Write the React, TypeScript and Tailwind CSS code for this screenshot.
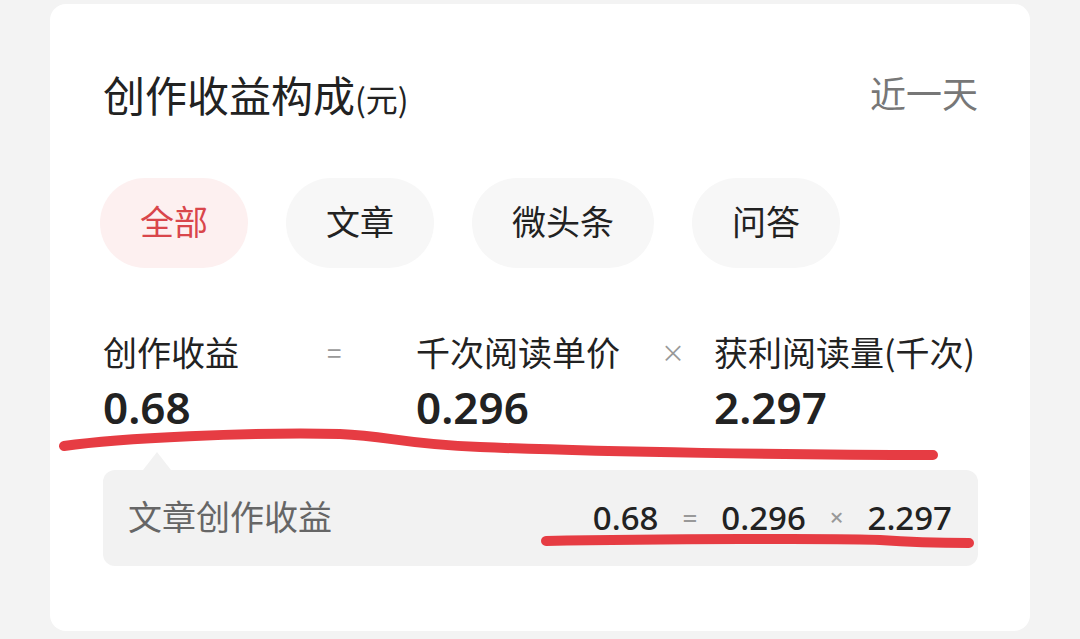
import React from 'react';

const cjk = { fontFamily: '"Noto Sans CJK SC", "Noto Sans", sans-serif' };
const num = { fontFamily: '"Noto Sans", "Noto Sans CJK SC", sans-serif' };

const tabs = ['全部', '文章', '微头条', '问答'];

export default function App() {
    return (
        <div className="relative w-[1080px] h-[639px] bg-[#f3f3f3] pt-[4px] px-[50px] overflow-hidden" style={cjk}>
            <div className="bg-white rounded-[16px] h-[627px] pl-[53px] pr-[52px] pt-[68px]">
                {/* header */}
                <div className="flex items-center justify-between h-[44px]">
                    <div className="flex items-baseline text-[#222] text-[42px] leading-none">
                        创作收益构成<span className="text-[32px]">(元)</span>
                    </div>
                    <div className="text-[36px] text-[#777] leading-none -mt-[4px]">近一天</div>
                </div>

                {/* tabs */}
                <div className="flex gap-[38px] mt-[62px] -ml-[3px]">
                    {tabs.map((t, i) => (
                        <div
                            key={t}
                            className={
                                i === 0
                                    ? 'h-[90px] px-[40px] rounded-full flex items-center text-[34px] leading-none pb-[4px] bg-[#fdf0f0] text-[#d9464b]'
                                    : 'h-[90px] px-[40px] rounded-full flex items-center text-[34px] leading-none pb-[4px] bg-[#f7f7f7] text-[#222]'
                            }
                        >
                            {t}
                        </div>
                    ))}
                </div>

                {/* formula */}
                <div className="flex mt-[64px] text-[#222]">
                    <div className="w-[224px]">
                        <div className="text-[34px] leading-[40px]">创作收益</div>
                        <div className="text-[44px] font-semibold leading-[50px] mt-[10px]" style={num}>0.68</div>
                    </div>
                    <div className="w-[89px] text-[26px] text-[#999] leading-[40px]">=</div>
                    <div className="w-[245px]">
                        <div className="text-[34px] leading-[40px] whitespace-nowrap">千次阅读单价</div>
                        <div className="text-[44px] font-semibold leading-[50px] mt-[10px]" style={num}>0.296</div>
                    </div>
                    <div className="w-[53px] text-[24px] text-[#999] leading-[40px]">×</div>
                    <div className="flex-1">
                        <div className="text-[34px] leading-[40px] whitespace-nowrap">获利阅读量(千次)</div>
                        <div className="text-[44px] font-semibold leading-[50px] mt-[10px]" style={num}>2.297</div>
                    </div>
                </div>

                {/* detail box */}
                <div className="mt-[20px]">
                    <div className="ml-[40px] w-0 h-0 border-l-[14px] border-r-[14px] border-b-[18px] border-l-transparent border-r-transparent border-b-[#f2f2f2]" />
                    <div className="h-[96px] bg-[#f2f2f2] rounded-[12px] flex items-center justify-between pl-[25px] pr-[26px]">
                        <div className="text-[34px] text-[#666] leading-none -mt-[4px]">文章创作收益</div>
                        <div className="flex items-center gap-[24px] text-[33px] text-[#222] font-medium leading-none -mt-[2px]" style={num}>
                            <span>0.68</span>
                            <span className="text-[#999] text-[26px]">=</span>
                            <span>0.296</span>
                            <span className="text-[#999] text-[24px]">×</span>
                            <span>2.297</span>
                        </div>
                    </div>
                </div>
            </div>

            {/* hand-drawn annotations */}
            <svg className="absolute inset-0 pointer-events-none" width="1080" height="639" viewBox="0 0 1080 639">
                <path
                    d="M64,446 C120,438 250,432 340,434 C390,436 400,444 480,447 C600,452 800,455 933,455"
                    fill="none"
                    stroke="#e63c43"
                    strokeWidth="10"
                    strokeLinecap="round"
                />
                <path
                    d="M546,541 C650,539 850,538 880,540 C920,543 950,543 969,543"
                    fill="none"
                    stroke="#e63c43"
                    strokeWidth="10"
                    strokeLinecap="round"
                />
            </svg>
        </div>
    );
}
